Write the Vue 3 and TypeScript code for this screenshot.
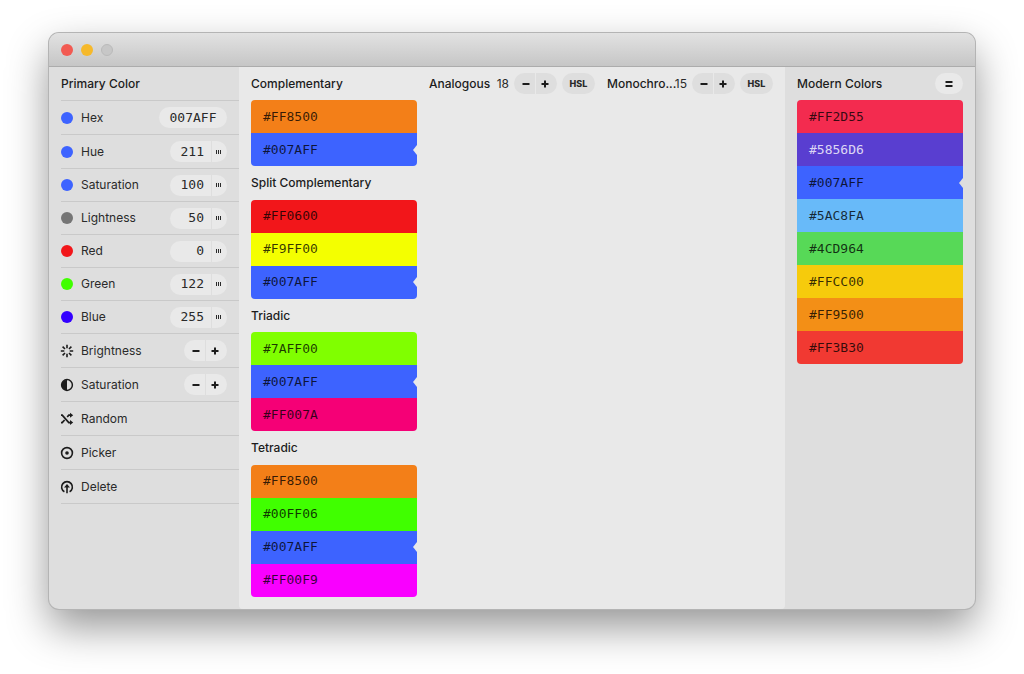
<script setup lang="ts">
import { ref } from 'vue'

interface Channel {
  id: string
  label: string
  tone: string
  value: string
}

interface Swatch {
  hex: string
  tone: string
  pale?: boolean
}

interface Harmony {
  title: string
  swatches: Swatch[]
}

const hex = ref('007AFF')

const channels = ref<Channel[]>([
  { id: 'hue', label: 'Hue', tone: 'azure', value: '211' },
  { id: 'saturation', label: 'Saturation', tone: 'azure', value: '100' },
  { id: 'lightness', label: 'Lightness', tone: 'gray', value: '50' },
  { id: 'red', label: 'Red', tone: 'red', value: '0' },
  { id: 'green', label: 'Green', tone: 'green', value: '122' },
  { id: 'blue', label: 'Blue', tone: 'blue', value: '255' },
])

const selected: Swatch = { hex: '007AFF', tone: '#3d63ff' }

const harmonies: Harmony[] = [
  { title: 'Complementary', swatches: [{ hex: 'FF8500', tone: '#f37f18' }, selected] },
  {
    title: 'Split Complementary',
    swatches: [{ hex: 'FF0600', tone: '#f2161a' }, { hex: 'F9FF00', tone: '#f4ff00' }, selected],
  },
  {
    title: 'Triadic',
    swatches: [{ hex: '7AFF00', tone: '#80ff00' }, selected, { hex: 'FF007A', tone: '#f50076' }],
  },
  {
    title: 'Tetradic',
    swatches: [
      { hex: 'FF8500', tone: '#f37f18' },
      { hex: '00FF06', tone: '#40ff00' },
      selected,
      { hex: 'FF00F9', tone: '#f900ff' },
    ],
  },
]

const ranges = ref([
  { name: 'Analogous', count: 18 },
  { name: 'Monochro...', count: 15 },
])

const palette: Swatch[] = [
  { hex: 'FF2D55', tone: '#f32b4f' },
  { hex: '5856D6', tone: '#593ed0', pale: true },
  selected,
  { hex: '5AC8FA', tone: '#68baf9' },
  { hex: '4CD964', tone: '#57d957' },
  { hex: 'FFCC00', tone: '#f6cb0c' },
  { hex: 'FF9500', tone: '#f38f16' },
  { hex: 'FF3B30', tone: '#f13932' },
]
</script>

<template>
  <div class="desktop">
    <main class="window">
      <header class="titlebar">
        <button class="light close" aria-label="Close"></button>
        <button class="light minimize" aria-label="Minimize"></button>
        <button class="light zoom" aria-label="Zoom" disabled></button>
      </header>

      <div class="panes">
        <aside class="side primary">
          <h2 class="heading row">Primary Color</h2>

          <div class="row">
            <span class="dot azure"></span>
            <label class="name" for="hex">Hex</label>
            <input id="hex" v-model="hex" class="pill hex-field" type="text" />
          </div>

          <div v-for="c in channels" :key="c.id" class="row" :class="{ compact: c.id !== 'hue' }">
            <span class="dot" :class="c.tone"></span>
            <label class="name" :for="c.id">{{ c.label }}</label>
            <div class="pill channel">
              <input :id="c.id" v-model="c.value" type="text" />
              <button :aria-label="`${c.label} slider`">
                <svg width="5" height="4" viewBox="0 0 5 4">
                  <path d="M0 0h1v4H0zM2 0h1v4H2zM4 0h1v4H4z" fill="currentColor" />
                </svg>
              </button>
            </div>
          </div>

          <div class="row">
            <svg class="icon" viewBox="0 0 12 12">
              <path
                d="M6 -.2v3.5M6 8.7v3.5M-.2 6h3.5M8.7 6h3.5M1.6 1.6l2.4 2.4M8 8l2.4 2.4M1.6 10.4L4 8M8 4l2.4-2.4"
                stroke="currentColor"
                stroke-width="1.6"
              />
            </svg>
            <span class="name">Brightness</span>
            <div class="pill stepper">
              <button aria-label="Decrease brightness">
                <svg width="8" height="8" viewBox="0 0 8 8"><path d="M.5 4h7" /></svg>
              </button>
              <button aria-label="Increase brightness">
                <svg width="8" height="8" viewBox="0 0 8 8"><path d="M.5 4h7M4 .5v7" /></svg>
              </button>
            </div>
          </div>

          <div class="row">
            <svg class="icon" viewBox="0 0 12 12">
              <circle cx="6" cy="6" r="5.4" fill="none" stroke="currentColor" stroke-width="1.5" />
              <path d="M6 .7a5.3 5.3 0 0 0 0 10.6z" fill="currentColor" />
            </svg>
            <span class="name">Saturation</span>
            <div class="pill stepper">
              <button aria-label="Decrease saturation">
                <svg width="8" height="8" viewBox="0 0 8 8"><path d="M.5 4h7" /></svg>
              </button>
              <button aria-label="Increase saturation">
                <svg width="8" height="8" viewBox="0 0 8 8"><path d="M.5 4h7M4 .5v7" /></svg>
              </button>
            </div>
          </div>

          <button class="row">
            <svg class="icon" viewBox="0 0 12 12">
              <path
                d="M0 2.2h1.2L7.8 9.6H10M0 9.6h1.2L3.6 7M6.2 4L7.8 2.2H10"
                fill="none"
                stroke="currentColor"
                stroke-width="1.7"
              />
              <path d="M9 -.2l3.2 2.5L9 4.8zM9 7.1l3.2 2.5L9 12.1z" fill="currentColor" />
            </svg>
            <span class="name">Random</span>
          </button>

          <button class="row">
            <svg class="icon" viewBox="0 0 12 12">
              <circle cx="6" cy="6" r="5.4" fill="none" stroke="currentColor" stroke-width="1.6" />
              <circle cx="6" cy="6" r="1.8" fill="currentColor" />
            </svg>
            <span class="name">Picker</span>
          </button>

          <button class="row">
            <svg class="icon" viewBox="0 0 12 12">
              <path
                d="M3.4 10.8a5.4 5.4 0 1 1 5.2 0"
                fill="none"
                stroke="currentColor"
                stroke-width="1.6"
              />
              <path d="M6 4v8.2" stroke="currentColor" stroke-width="1.6" />
              <path d="M6 2.9L9 6.6H3z" fill="currentColor" />
            </svg>
            <span class="name">Delete</span>
          </button>
        </aside>

        <section class="harmonies">
          <div class="column">
            <section v-for="h in harmonies" :key="h.title">
              <h2 class="heading bar">{{ h.title }}</h2>
              <div class="swatches">
                <button
                  v-for="s in h.swatches"
                  :key="s.hex"
                  class="swatch"
                  :class="{ current: s.hex === hex }"
                  :style="{ backgroundColor: s.tone }"
                >
                  #{{ s.hex }}
                </button>
              </div>
            </section>
          </div>

          <section v-for="r in ranges" :key="r.name">
            <div class="bar">
              <h2 class="heading">{{ r.name }}</h2>
              <span class="count">{{ r.count }}</span>
              <div class="pill stepper dim">
                <button :aria-label="`Fewer ${r.name}`" @click="r.count--">
                  <svg width="8" height="8" viewBox="0 0 8 8"><path d="M.5 4h7" /></svg>
                </button>
                <button :aria-label="`More ${r.name}`" @click="r.count++">
                  <svg width="8" height="8" viewBox="0 0 8 8"><path d="M.5 4h7M4 .5v7" /></svg>
                </button>
              </div>
              <button class="pill mode dim">HSL</button>
            </div>
          </section>
        </section>

        <aside class="side library">
          <div class="bar">
            <h2 class="heading">Modern Colors</h2>
            <button class="pill menu" aria-label="Palette menu">
              <svg width="8" height="8" viewBox="0 0 8 8"><path d="M.5 2h7M.5 6h7" /></svg>
            </button>
          </div>
          <div class="swatches">
            <button
              v-for="s in palette"
              :key="s.hex"
              class="swatch"
              :class="{ current: s.hex === hex, pale: s.pale }"
              :style="{ backgroundColor: s.tone }"
            >
              #{{ s.hex }}
            </button>
          </div>
        </aside>
      </div>
    </main>
  </div>
</template>

<style>
body {
  margin: 0;
  background: #fff;
}
</style>

<style scoped>
* {
  box-sizing: border-box;
}

.desktop {
  display: flex;
  min-height: 100vh;
  padding: 33px 49px 65px;
  color: #2a2a2a;
  font: 12px/16px Inter, 'Liberation Sans', sans-serif;
}

button,
input {
  margin: 0;
  padding: 0;
  border: 0;
  background: none;
  color: inherit;
  font: inherit;
}

.window {
  display: flex;
  flex: 1;
  flex-direction: column;
  overflow: hidden;
  border-radius: 10px;
  background: #dedede;
  box-shadow:
    0 0 0 1px #b4b4b4,
    0 18px 42px rgba(0, 0, 0, 0.42);
}

.titlebar {
  display: flex;
  align-items: center;
  gap: 8px;
  height: 34px;
  padding: 0 12px;
  border-bottom: 1px solid #acacac;
  background: linear-gradient(#e2e2e2, #c6c6c6);
}

.light {
  width: 12px;
  height: 12px;
  border-radius: 50%;
}

.close {
  background: #f25a52;
}

.minimize {
  background: #f6b92b;
}

.zoom {
  border: 1px solid #bababa;
  background: #c7c7c7;
}

.panes {
  display: flex;
  flex: 1;
}

.side {
  flex: none;
  width: 190px;
  padding-left: 12px;
}

.library {
  padding-right: 12px;
}

.heading {
  margin: 0;
  font-size: 12px;
  font-weight: 500;
  color: #1c1c1c;
  white-space: nowrap;
}

.row {
  display: flex;
  align-items: center;
  gap: 8px;
  width: 100%;
  height: 34px;
  padding-right: 12px;
  border-bottom: 1px solid #c9c9c9;
  text-align: left;
}

.compact {
  height: 33px;
}

.name {
  flex: 1;
}

.dot,
.icon {
  flex: none;
  width: 12px;
  height: 12px;
}

.icon {
  overflow: visible;
  color: #1c1c1c;
}

.dot {
  border-radius: 50%;
}

.azure {
  background: #3d63ff;
}

.gray {
  background: #757575;
}

.red {
  background: #f2161a;
}

.green {
  background: #40ff00;
}

.blue {
  background: #3300ff;
}

.pill {
  flex: none;
  height: 21px;
  border-radius: 11px;
  background: #e9e9e9;
  overflow: hidden;
}

.hex-field {
  width: 68px;
  text-align: center;
}

.hex-field,
.channel input,
.swatch {
  font-family: 'DejaVu Sans Mono', 'Liberation Mono', monospace;
  font-size: 13px;
}

.channel {
  display: flex;
  width: 57px;
}

.channel input {
  flex: 1;
  min-width: 0;
  padding-right: 7px;
  text-align: right;
}

.channel button,
.stepper button,
.mode,
.menu {
  display: flex;
  align-items: center;
  justify-content: center;
}

.channel button {
  width: 16px;
  padding-right: 2px;
  border-left: 1px solid #dedede;
}

.stepper {
  display: flex;
  width: 43px;
}

.stepper button {
  width: 21px;
  padding-left: 2px;
}

.stepper button + button {
  width: 22px;
  padding: 0 3px 0 0;
  border-left: 1px solid #dedede;
}

.stepper path,
.menu path {
  fill: none;
  stroke: #1c1c1c;
  stroke-width: 2;
}

.dim {
  background: #dedede;
}

.stepper.dim button + button {
  border-color: #e9e9e9;
}

.mode {
  width: 33px;
  font-size: 9px;
  font-weight: 800;
}

.menu {
  width: 28px;
}

.harmonies {
  display: grid;
  flex: 1;
  grid-template-columns: repeat(3, minmax(0, 1fr));
  gap: 12px;
  padding: 0 12px 12px;
  border-radius: 0 0 4px 4px;
  background: #e9e9e9;
}

.column {
  display: flex;
  flex-direction: column;
  justify-content: space-between;
}

.bar {
  display: flex;
  align-items: center;
  gap: 5px;
  height: 33px;
}

.bar > .heading {
  flex: 1;
  min-width: 0;
}

.swatches {
  display: flex;
  flex-direction: column;
  border-radius: 4px;
  overflow: hidden;
}

.swatch {
  position: relative;
  height: 33px;
  padding: 0 12px;
  color: rgba(0, 0, 0, 0.78);
  text-align: left;
}

.swatch.pale {
  color: rgba(255, 255, 255, 0.8);
}

.current::after {
  content: '';
  position: absolute;
  top: 50%;
  right: 0;
  border: solid transparent;
  border-width: 5px 4px 5px 0;
  border-right-color: #e9e9e9;
  transform: translateY(-50%);
}

.library .current::after {
  border-right-color: #dedede;
}
</style>
